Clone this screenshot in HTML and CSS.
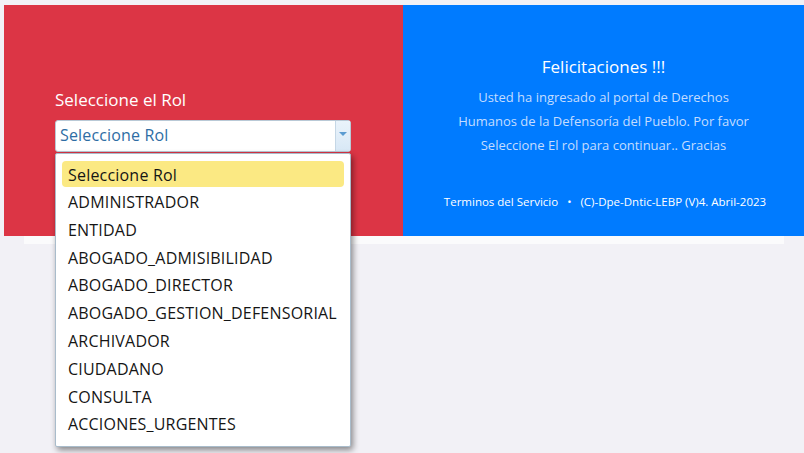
FILE: index.html
```html
<!DOCTYPE html>
<html lang="es">
<head>
<meta charset="utf-8">
<title>Seleccione el Rol</title>
<link rel="stylesheet" href="styles.css">
</head>
<body>
<div class="stage">
  <div class="row">
    <div class="panel-left">
      <div class="form">
        <label class="label">Seleccione el Rol</label>
        <div class="select">
          <span class="select-value">Seleccione Rol</span>
          <span class="select-arrow"><span class="tri"></span></span>
          <ul class="list">
            <li class="item active">Seleccione Rol</li>
            <li class="item">ADMINISTRADOR</li>
            <li class="item">ENTIDAD</li>
            <li class="item">ABOGADO_ADMISIBILIDAD</li>
            <li class="item">ABOGADO_DIRECTOR</li>
            <li class="item">ABOGADO_GESTION_DEFENSORIAL</li>
            <li class="item">ARCHIVADOR</li>
            <li class="item">CIUDADANO</li>
            <li class="item">CONSULTA</li>
            <li class="item">ACCIONES_URGENTES</li>
          </ul>
        </div>
      </div>
    </div>
    <div class="panel-right">
      <h2 class="title">Felicitaciones !!!</h2>
      <p class="text">Usted ha ingresado al portal de Derechos<br>Humanos de la Defensoría del Pueblo. Por favor<br>Seleccione El rol para continuar.. Gracias</p>
      <p class="footer">Terminos del Servicio <span class="dot">•</span> (C)-Dpe-Dntic-LEBP (V)4. Abril-2023</p>
    </div>
  </div>
  <div class="strip"></div>
</div>
</body>
</html>
```

FILE: styles.css
```css
html, body {
  margin: 0;
  padding: 0;
}
body {
  background: #f2f1f6;
  font-family: "Open Sans", "Noto Sans", sans-serif;
  width: 804px;
  height: 453px;
  overflow: hidden;
}
.stage {
  padding-top: 5px;
}
.row {
  display: flex;
  margin-left: 4px;
  height: 231px;
}
.panel-left {
  width: 399px;
  background: #dc3545;
  padding: 0 52px 0 51px;
  box-sizing: border-box;
}
.form {
  padding-top: 84px;
}
.label {
  display: block;
  color: #fff;
  font-size: 17px;
  line-height: 22px;
  margin-bottom: 9px;
}
.select {
  position: relative;
  height: 32px;
  background: #fff;
  border: 1px solid #b9c9d6;
  border-radius: 3px;
  box-sizing: border-box;
  display: flex;
}
.select-value {
  flex: 1;
  color: #2e6da4;
  font-size: 16px;
  line-height: 29px;
  padding-left: 4px;
  letter-spacing: 0.15px;
}
.select-arrow {
  width: 15px;
  border-left: 1px solid #c5d7e6;
  background: linear-gradient(#eaf3fb, #d8e8f6);
  display: flex;
  justify-content: center;
  padding-top: 11px;
  box-sizing: border-box;
}
.tri {
  width: 0;
  height: 0;
  border-left: 4px solid transparent;
  border-right: 4px solid transparent;
  border-top: 4px solid #5b9bd1;
}
.list {
  position: absolute;
  left: -1px;
  right: -1px;
  top: 32px;
  margin: 0;
  padding: 7px 6px 8px 6px;
  list-style: none;
  background: #fff;
  border: 1px solid #a9bccb;
  border-radius: 2px;
  box-shadow: 2px 3px 6px rgba(0, 0, 0, 0.45);
  z-index: 5;
}
.item {
  color: #151515;
  font-size: 16px;
  letter-spacing: 0.2px;
  line-height: 27.8px;
  padding-left: 6px;
  padding-top: 1px;
  height: 26.8px;
  border-radius: 4px;
  white-space: nowrap;
}
.item.active {
  background: #fbe983;
  line-height: 26px;
  height: 25px;
  margin-bottom: 1px;
}
.panel-right {
  flex: 1;
  background: #007bff;
  color: #fff;
  text-align: center;
  padding-top: 49px;
}
.title {
  margin: 0;
  font-weight: 400;
  font-size: 17px;
  line-height: 26px;
}
.text {
  margin: 5px 0 0 0;
  font-size: 13px;
  line-height: 24px;
  color: #c4ddff;
}
.footer {
  margin: 37px 0 0 0;
  font-size: 11.5px;
  line-height: 16px;
  padding-left: 3px;
}
.dot {
  margin: 0 6px;
}
.strip {
  margin: 0 20px 0 24px;
  height: 8px;
  background: #fbfbfc;
}
```
